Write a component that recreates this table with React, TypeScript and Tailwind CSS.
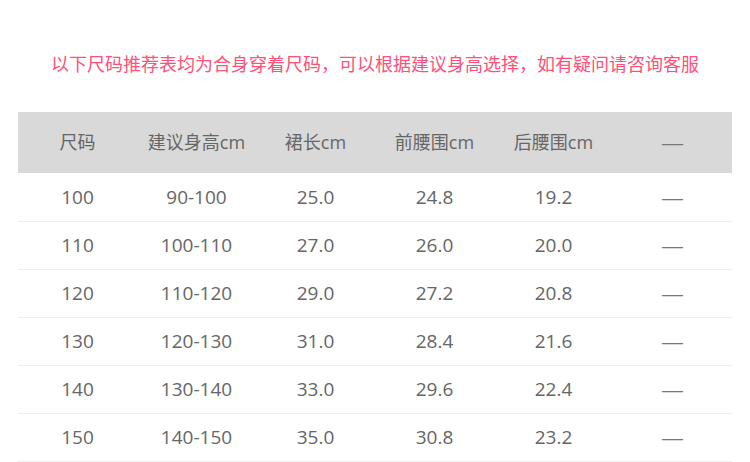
import React from "react";

const headers = ["尺码", "建议身高cm", "裙长cm", "前腰围cm", "后腰围cm", "—"];
const rows = [
  ["100", "90-100", "25.0", "24.8", "19.2", "—"],
  ["110", "100-110", "27.0", "26.0", "20.0", "—"],
  ["120", "110-120", "29.0", "27.2", "20.8", "—"],
  ["130", "120-130", "31.0", "28.4", "21.6", "—"],
  ["140", "130-140", "33.0", "29.6", "22.4", "—"],
  ["150", "140-150", "35.0", "30.8", "23.2", "—"],
];

const cjk = { fontFamily: '"Noto Sans CJK SC", sans-serif' };
const dash = { fontFamily: '"Liberation Sans", sans-serif' };

export default function App() {
  return (
    <div
      className="w-[750px] h-[462px] bg-white overflow-hidden"
      style={{ fontFamily: '"Open Sans", "Noto Sans CJK SC", sans-serif' }}
    >
      <div className="h-[112px] pt-[50px]">
        <p className="text-center text-[18px] leading-[26px] text-[#ff5078]" style={cjk}>
          以下尺码推荐表均为合身穿着尺码，可以根据建议身高选择，如有疑问请咨询客服
        </p>
      </div>
      <div className="mx-[18px]">
        <div className="grid grid-cols-6 h-[61px] bg-[#d9d9d9] items-center text-[18px] text-[#666]">
          {headers.map((h, i) =>
            h === "—" ? (
              <div key={i} className="text-center text-[21px] leading-[27px] text-[#777]" style={dash}>
                {h}
              </div>
            ) : (
              <div key={i} className="text-center">
                {h}
              </div>
            )
          )}
        </div>
        <div className="pt-[1px]">
          {rows.map((r, ri) => (
            <div
              key={ri}
              className="grid grid-cols-6 h-[48px] items-center border-b border-[#eeeeee] text-[19px] text-[#666]"
            >
              {r.map((c, ci) =>
                c === "—" ? (
                  <div key={ci} className="text-center text-[21px] leading-[27px] text-[#777]" style={dash}>
                    {c}
                  </div>
                ) : (
                  <div key={ci} className="text-center">
                    {c}
                  </div>
                )
              )}
            </div>
          ))}
        </div>
      </div>
    </div>
  );
}
